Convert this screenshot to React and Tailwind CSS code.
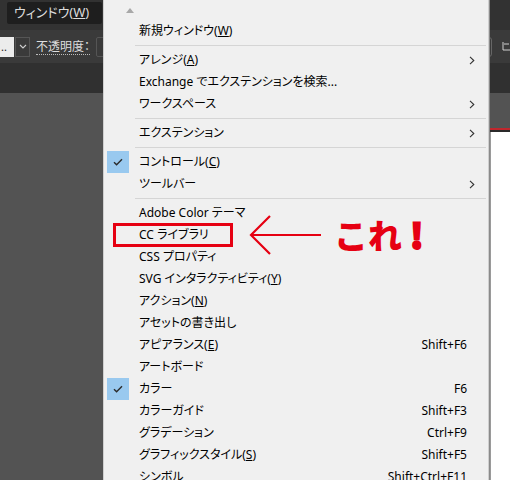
import React from 'react';

const items = [
  { label: <>新規ウィンドウ(<u>W</u>)</> },
  { sep: true },
  { label: <>アレンジ(<u>A</u>)</>, sub: true },
  { label: 'Exchange でエクステンションを検索...' },
  { label: 'ワークスペース', sub: true },
  { sep: true },
  { label: 'エクステンション', sub: true },
  { sep: true },
  { label: <>コントロール(<u>C</u>)</>, checked: true },
  { label: 'ツールバー', sub: true },
  { sep: true },
  { label: 'Adobe Color テーマ' },
  { label: 'CC ライブラリ', marked: true },
  { label: 'CSS プロパティ' },
  { label: <>SVG インタラクティビティ(<u>Y</u>)</> },
  { label: <>アクション(<u>N</u>)</> },
  { label: 'アセットの書き出し' },
  { label: <>アピアランス(<u>E</u>)</>, key: 'Shift+F6' },
  { label: 'アートボード' },
  { label: 'カラー', checked: true, key: 'F6' },
  { label: 'カラーガイド', key: 'Shift+F3' },
  { label: 'グラデーション', key: 'Ctrl+F9' },
  { label: <>グラフィックスタイル(<u>S</u>)</>, key: 'Shift+F5' },
  { label: 'シンボル', key: 'Shift+Ctrl+F11' },
];

const Check = () => (
  <svg width="10" height="8" viewBox="0 0 10 8" fill="none">
    <path d="M1 4.2 L3.6 6.8 L9 1.2" stroke="#2b2b2b" strokeWidth="1.4" />
  </svg>
);

const Chevron = () => (
  <svg width="6" height="9" viewBox="0 0 6 9" fill="none">
    <path d="M1 0.8 L4.8 4.5 L1 8.2" stroke="#333" strokeWidth="1.1" />
  </svg>
);

export default function App() {
  return (
    <div className="relative w-[510px] h-[480px] overflow-hidden bg-[#535353] font-['Noto_Sans','Noto_Sans_CJK_JP',sans-serif] [font-feature-settings:'palt']">
      {/* app chrome behind the menu */}
      <div className="h-[30px] bg-[#323232] flex items-start pt-[2px] pl-[7px]">
        <div className="h-[22px] w-[95px] rounded-[2px] bg-[#1e1e1e] flex items-center pl-[7px] text-[13px] text-[#dcdcdc]">
          ウィンドウ(<u>W</u>)
        </div>
      </div>
      <div className="h-[33px] bg-[#3a3a3a] flex items-center justify-between">
        <div className="flex items-center gap-[6px]">
          <div className="h-[20px] w-[14px] bg-[#ececec] text-[11px] leading-[20px] text-[#222] pl-[1px]">..</div>
          <div className="h-[20px] w-[15px] -ml-[5px] border border-[#555] flex items-center justify-center">
            <svg width="8" height="5" viewBox="0 0 8 5" fill="none"><path d="M1 1 L4 4 L7 1" stroke="#cfcfcf" strokeWidth="1.1" /></svg>
          </div>
          <span className="text-[12px] text-[#dedede] border-b border-dotted border-[#bbb] leading-[15px]">不透明度：</span>
          <div className="h-[20px] w-[10px] border border-[#555] rounded-[2px]" />
        </div>
        <div className="flex items-center gap-[10px]">
          <div className="h-[20px] w-[15px] border border-[#666] rounded-[3px]" />
          <svg width="8" height="10" viewBox="0 0 8 10" fill="none"><path d="M1 0 V8 H8 M2 2 H7" stroke="#cfcfcf" strokeWidth="1" /></svg>
        </div>
      </div>
      <div className="h-[30px] bg-[#303030]" />

      {/* artboard at the right edge */}
      <div className="absolute left-[488px] top-[128px] w-[22px] h-[352px] flex flex-col">
        <div className="h-[2px] bg-[#c0272d]" />
        <div className="h-[2px] bg-[#2a2a2a]" />
        <div className="flex-1 bg-white border-l-[3px] border-[#9a9a9a]" />
      </div>

      {/* dropdown menu */}
      <div className="absolute left-[103px] top-[-1px] w-[386px] h-[490px] bg-[#f0f0f0] border border-[#cfcfcf] shadow-[1px_0_0_#8a8a8a] text-[12px] text-black">
        <div className="h-[20px] pl-[22px] pt-[8px]">
          <svg width="8" height="5" viewBox="0 0 8 5"><path d="M0 5 L4 0 L8 5 Z" fill="#a8a8a8" /></svg>
        </div>
        {items.map((it, i) =>
          it.sep ? (
            <div key={i} className="h-[7px] pl-[31px] pr-[2px] pt-[3px]">
              <div className="h-[1px] bg-[#d5d5d5]" />
            </div>
          ) : (
            <div key={i} className="h-[22px] flex items-center pl-[3px] pr-[12px]">
              <div className={`w-[22px] h-[22px] flex items-center justify-center ${it.checked ? 'bg-[#99c9ef]' : ''}`}>
                {it.checked && <Check />}
              </div>
              <div className="flex-1 pl-[10px] whitespace-nowrap">
                {it.marked ? (
                  <span className="inline-block -ml-[26px] pl-[23px] w-[120px] h-[24px] leading-[18px] border-[3px] border-[#e60012]">{it.label}</span>
                ) : (
                  it.label
                )}
              </div>
              {it.key && <span className="pr-[9px]">{it.key}</span>}
              {it.sub && <span className="pr-[1px]"><Chevron /></span>}
            </div>
          )
        )}
      </div>

      {/* annotation */}
      <div className="absolute left-[248px] top-[214px] flex items-center gap-[12px]">
        <svg width="74" height="42" viewBox="0 0 74 42" fill="none">
          <path d="M73 21 H3 M22 2 L3 21 L22 40" stroke="#e60012" strokeWidth="2.2" />
        </svg>
        <span className="text-[34px] leading-[42px] font-black text-[#e60012] font-['Noto_Sans_CJK_JP',sans-serif] [font-feature-settings:normal]">
          これ<span className="ml-[8px] font-black [-webkit-text-stroke:2px_#e60012]">!</span>
        </span>
      </div>
    </div>
  );
}
